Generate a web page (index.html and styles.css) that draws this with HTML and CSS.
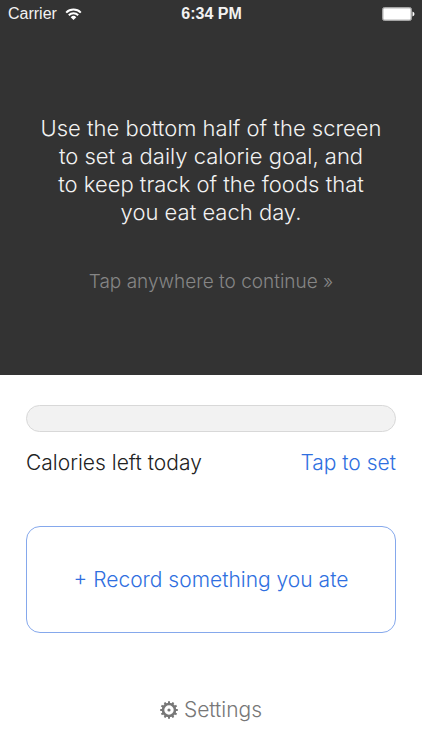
FILE: index.html
```html
<!DOCTYPE html>
<html lang="en">
	<head>
		<meta charset="utf-8">
		<meta name="viewport" content="width=device-width, initial-scale=1">
		<title>Calories</title>
		<link rel="stylesheet" href="styles.css">
	</head>
	<body>
		<section class="intro">
			<header class="status-bar">
				<div class="carrier">
					<span>Carrier</span>
					<svg class="wifi" width="17" height="12" viewBox="0 0 16 12" aria-hidden="true">
						<g fill="none" stroke="#fff" stroke-width="2">
							<path d="M0.7 4.6a10.3 10.3 0 0 1 14.6 0"/>
							<path d="M3.3 7.3a6.6 6.6 0 0 1 9.4 0"/>
						</g>
						<path fill="#fff" d="M8 12 5.2 9.2a4 4 0 0 1 5.6 0z"/>
					</svg>
				</div>
				<div class="clock">6:34 PM</div>
				<div class="battery">
					<svg width="33" height="14" viewBox="0 0 33 14" aria-hidden="true">
						<rect x="0.5" y="0.5" width="29" height="13" rx="2" fill="#b5b5b5" stroke="#a5a5a5"/>
						<rect x="1.5" y="1.5" width="27" height="11" rx="1" fill="#fff"/>
						<path fill="#fff" d="M30.5 4.5q2 .7 2 2.5t-2 2.5z"/>
					</svg>
				</div>
			</header>
			<div class="tip">
				<p class="tip-text">Use the bottom half of the screen<br>to set a daily calorie goal, and<br>to keep track of the foods that<br>you eat each day.</p>
				<button class="continue" type="button">Tap anywhere to continue »</button>
			</div>
		</section>
		<main class="tracker">
			<div class="progress" role="progressbar" aria-labelledby="calories-label"></div>
			<div class="goal">
				<span id="calories-label">Calories left today</span>
				<button class="set-goal" type="button">Tap to set</button>
			</div>
			<button class="record" type="button">+ Record something you ate</button>
			<button class="settings" type="button">
				<svg width="18" height="18" viewBox="-9 -9 18 18" aria-hidden="true">
					<g stroke="#777" stroke-width="2">
						<path d="M0-8.8v3M0 8.8v-3M-8.8 0h3M8.8 0h-3"/>
						<path d="M0-8.8v3M0 8.8v-3M-8.8 0h3M8.8 0h-3" transform="rotate(30)"/>
						<path d="M0-8.8v3M0 8.8v-3M-8.8 0h3M8.8 0h-3" transform="rotate(60)"/>
					</g>
					<circle r="6" fill="none" stroke="#777" stroke-width="2.6"/>
					<circle r="1.6" fill="#777"/>
				</svg>
				<span>Settings</span>
			</button>
		</main>
	</body>
</html>
```
FILE: styles.css
```css
* {
	box-sizing: border-box;
}

body {
	margin: 0;
	min-height: 100vh;
	display: grid;
	grid-template-rows: 1fr 1fr;
	background-color: #fff;
	font-family: Inter, "Liberation Sans", sans-serif;
	font-size: 21px;
	font-weight: 300;
	line-height: 28px;
	color: #222;
}

button {
	padding: 0;
	border: 0;
	background: none;
	font: inherit;
	color: #2f6fe0;
	cursor: pointer;
}

.intro {
	background-color: #333;
	color: #f2f2f2;
}

.status-bar {
	display: grid;
	grid-template-columns: 1fr auto 1fr;
	align-items: center;
	height: 28px;
	padding: 0 7px 0 8px;
	font-family: "Liberation Sans", sans-serif;
	font-size: 16px;
	font-weight: 400;
}

.carrier {
	display: flex;
	align-items: center;
	gap: 8px;
}

.clock {
	font-weight: 700;
}

.battery {
	display: flex;
	justify-content: flex-end;
}

.tip {
	display: flex;
	flex-direction: column;
	align-items: center;
	gap: 42px;
	padding: 86px 16px 32px;
	text-align: center;
}

.tip-text {
	margin: 0;
	font-size: 22px;
}

.continue {
	font-size: 19px;
	color: #868686;
}

.tracker {
	display: flex;
	flex-direction: column;
	padding: 30px 26px 26px;
}

.progress {
	height: 27px;
	border: 1px solid #d8d8d8;
	border-radius: 14px;
	background-color: #f2f2f2;
}

.goal {
	display: flex;
	justify-content: space-between;
	margin-top: 17px;
}

.record {
	height: 107px;
	margin-top: 49px;
	border: 1px solid #85a8ec;
	border-radius: 14px;
}

.settings {
	display: flex;
	align-items: center;
	align-self: center;
	gap: 6px;
	margin-top: auto;
	color: #777;
}
```
